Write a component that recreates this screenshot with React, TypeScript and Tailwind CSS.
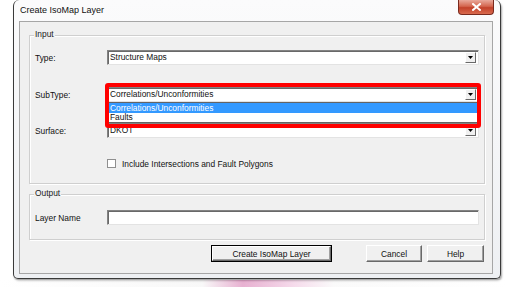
import type { ReactNode } from "react";

const ui = "font-['Liberation_Sans',Arial,sans-serif]";

function DropArrow() {
  return (
    <div className="mr-[2px] flex h-[11px] w-[11px] items-center justify-center border-t border-l border-b border-r border-t-white border-l-white border-b-[#696969] border-r-[#696969] bg-[#f0f0f0]">
      <svg width="5" height="3" viewBox="0 0 5 3">
        <path d="M0 0h5L2.5 3z" fill="#000" />
      </svg>
    </div>
  );
}

function Combo({ value, children }: { value: string; children?: ReactNode }) {
  return (
    <div className="relative h-[15px] w-[372px]">
      <div className="flex h-full w-full items-center border border-t-[#828282] border-l-[#828282] border-b-[#e3e3e3] border-r-[#e3e3e3] bg-white shadow-[inset_1px_1px_0_#696969]">
        <span className="pl-[2px] leading-none">{value}</span>
        <div className="ml-auto">
          <DropArrow />
        </div>
      </div>
      {children}
    </div>
  );
}

function Row({ label, children }: { label: string; children: ReactNode }) {
  return (
    <div className="flex items-center">
      <div className="w-[72px] pt-[1px] leading-none">{label}</div>
      {children}
    </div>
  );
}

function GroupBox({ title, className, children }: { title: string; className: string; children: ReactNode }) {
  return (
    <div className={`relative ml-[9px] w-[456px] border border-[#cfcfcf] shadow-[inset_1px_1px_0_#fff,1px_1px_0_#fff] ${className}`}>
      <span className="absolute -top-[6px] left-[4px] bg-[#f0f0f0] px-[1px] leading-none text-[#1a1a1a]">{title}</span>
      {children}
    </div>
  );
}

function Button({ label, width, isDefault }: { label: string; width: string; isDefault?: boolean }) {
  return (
    <div className={`${width} h-[17px] ${isDefault ? "border border-black" : ""}`}>
      <div className="flex h-full w-full items-center justify-center border border-t-white border-l-white border-b-[#696969] border-r-[#696969] bg-[#f0f0f0] pt-[1px] shadow-[inset_-1px_-1px_0_#a0a0a0] leading-none">
        {label}
      </div>
    </div>
  );
}

export default function App() {
  return (
    <div className={`${ui} h-[287px] w-[506px] overflow-hidden bg-white text-[8.4px] text-[#111]`}>
      {/* dialog window */}
      <div className="ml-[13px] flex h-[279px] w-[488px] flex-col rounded-t-[6px] rounded-b-[5px] border border-t-0 border-[#3a3a3a] bg-[linear-gradient(180deg,#fbfbfc_0%,#eef0f3_100%)] shadow-[1px_2px_2px_rgba(0,0,0,0.35)]">
        <div className="flex h-[21px] items-start justify-between">
          <span className="mt-[6px] pl-[6px] text-[9px] leading-none text-[#111]">Create IsoMap Layer</span>
          <div className="mr-[6px] flex h-[15px] w-[36px] items-center justify-center rounded-b-[4px] border border-t-0 border-[#7a2a1e] bg-[linear-gradient(180deg,#e9a99b_0%,#d4664f_45%,#c2412a_55%,#d96a4f_100%)]">
            <svg width="9" height="8" viewBox="0 0 9 8">
              <path d="M1 1l7 6M8 1L1 7" stroke="#fff" strokeWidth="2" strokeLinecap="square" />
            </svg>
          </div>
        </div>

        {/* client area */}
        <div className="ml-[5px] flex h-[253px] w-[474px] flex-col border border-[#a6a6a6] bg-[#f0f0f0]">
          <GroupBox title="Input" className="mt-[13px] h-[149px]">
            <div className="flex flex-col pl-[5px] pt-[14px]">
              <Row label="Type:">
                <Combo value="Structure Maps" />
              </Row>
              <div className="mt-[22px]">
                <Row label="SubType:">
                  <div className="relative z-10">
                    <Combo value="Correlations/Unconformities">
                      <div className="absolute left-0 top-full flex h-[21px] w-[371px] flex-col border border-[#646464] bg-white">
                        <div className="flex h-[10px] items-center bg-[#3399ff] pl-[2px] leading-none text-white">Correlations/Unconformities</div>
                        <div className="flex h-[9px] items-center pl-[2px] leading-none">Faults</div>
                      </div>
                      <div className="absolute -left-[2px] -top-[4px] h-[45px] w-[376px] rounded-[3px] border-4 border-[#ff0000]" />
                    </Combo>
                  </div>
                </Row>
              </div>
              <div className="mt-[21px]">
                <Row label="Surface:">
                  <Combo value="DKOT" />
                </Row>
              </div>
              <div className="mt-[21px] flex items-center pl-[72px]">
                <div className="h-[9px] w-[9px] border border-[#8f8f8f] bg-white" />
                <span className="ml-[6px] pt-[1px] leading-none">Include Intersections and Fault Polygons</span>
              </div>
            </div>
          </GroupBox>

          <GroupBox title="Output" className="mt-[10px] h-[46px]">
            <div className="pl-[5px] pt-[15px]">
              <Row label="Layer Name">
                <div className="h-[15px] w-[372px] border border-t-[#828282] border-l-[#828282] border-b-[#e3e3e3] border-r-[#e3e3e3] bg-white shadow-[inset_1px_1px_0_#696969]" />
              </Row>
            </div>
          </GroupBox>

          <div className="mt-[5px] flex items-center pl-[191px]">
            <Button label="Create IsoMap Layer" width="w-[121px]" isDefault />
            <div className="ml-[34px]">
              <Button label="Cancel" width="w-[56px]" />
            </div>
            <div className="ml-[5px]">
              <Button label="Help" width="w-[57px]" />
            </div>
          </div>
        </div>
      </div>
      <div className="mt-[1px] h-[7px] w-full bg-[linear-gradient(90deg,#ffffff_0%,#eeeeee_40%,#c43b8c_48%,#e7a4cd_58%,#f3f3f3_66%,#ffffff_100%)] opacity-40" />
    </div>
  );
}
